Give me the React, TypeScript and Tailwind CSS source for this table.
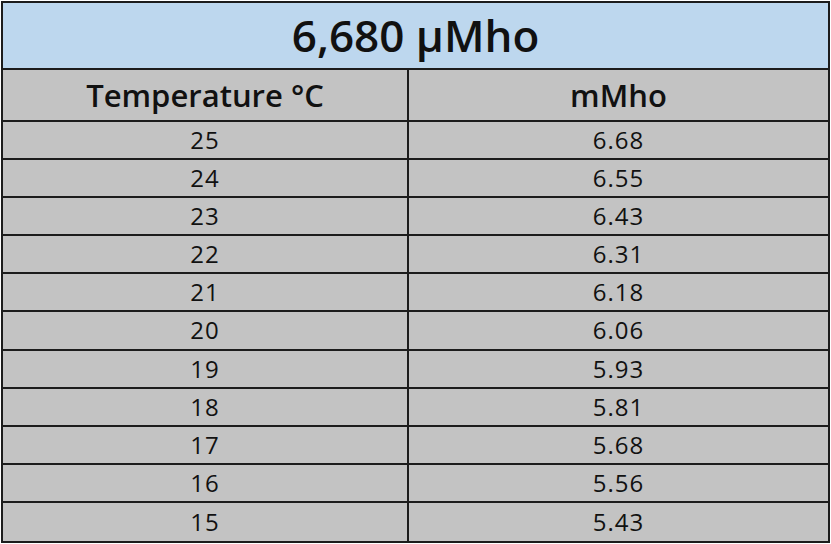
import React from "react";

const rows: [string, string][] = [
  ["25", "6.68"],
  ["24", "6.55"],
  ["23", "6.43"],
  ["22", "6.31"],
  ["21", "6.18"],
  ["20", "6.06"],
  ["19", "5.93"],
  ["18", "5.81"],
  ["17", "5.68"],
  ["16", "5.56"],
  ["15", "5.43"],
];

export default function App() {
  return (
    <div className="w-[831px] h-[544px] bg-white pl-[1px] pt-[1px]" style={{ fontFamily: '"Open Sans", "Noto Sans", sans-serif' }}>
      <div className="w-[829px] h-[542px] border-2 border-[#1c1c1c] flex flex-col text-[#111]">
        <div className="h-[67px] bg-[#bdd7ee] border-b-2 border-[#1c1c1c] flex items-center justify-center text-[44px] font-semibold leading-none pb-[2px]">
          6,680 µMho
        </div>
        <div className="h-[52px] bg-[#c3c3c3] border-b-2 border-[#1c1c1c] grid grid-cols-[406px_1fr] text-[31px] font-semibold leading-none">
          <div className="border-r-2 border-[#1c1c1c] flex items-center justify-center">Temperature °C</div>
          <div className="flex items-center justify-center">mMho</div>
        </div>
        <div className="flex-1 grid grid-rows-[repeat(11,1fr)] bg-[#c3c3c3]">
          {rows.map(([t, m], i) => (
            <div
              key={t}
              className={`grid grid-cols-[406px_1fr] text-[24px] leading-none tracking-[1px] ${i < rows.length - 1 ? "border-b-2 border-[#1c1c1c]" : ""}`}
            >
              <div className="border-r-2 border-[#1c1c1c] flex items-center justify-center">{t}</div>
              <div className="flex items-center justify-center">{m}</div>
            </div>
          ))}
        </div>
      </div>
    </div>
  );
}
